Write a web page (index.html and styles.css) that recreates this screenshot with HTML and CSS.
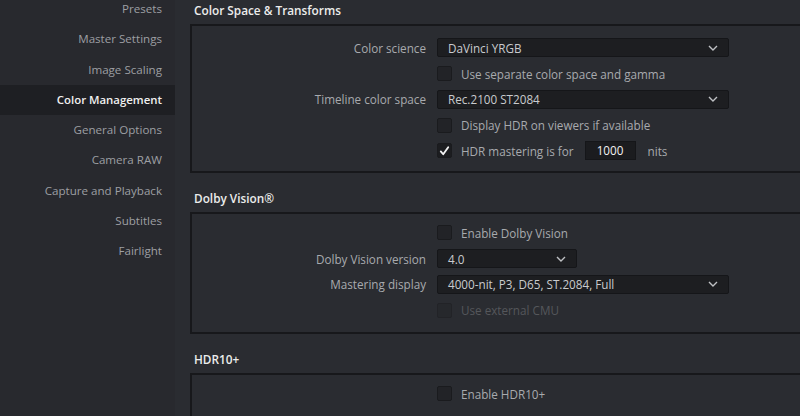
FILE: index.html
```html
<!DOCTYPE html>
<html>
<head>
<meta charset="utf-8">
<link rel="stylesheet" href="styles.css">
</head>
<body>
<div class="app">
  <nav class="sidebar">
    <ul class="nav-list">
      <li class="nav-item">Presets</li>
      <li class="nav-item">Master Settings</li>
      <li class="nav-item">Image Scaling</li>
      <li class="nav-item active">Color Management</li>
      <li class="nav-item">General Options</li>
      <li class="nav-item">Camera RAW</li>
      <li class="nav-item">Capture and Playback</li>
      <li class="nav-item">Subtitles</li>
      <li class="nav-item">Fairlight</li>
    </ul>
  </nav>
  <main class="content">
    <h2 class="section-title">Color Space &amp; Transforms</h2>
    <section class="panel panel-cs">
      <div class="row">
        <label class="row-label">Color science</label>
        <div class="select wide"><span>DaVinci YRGB</span><svg class="chev" viewBox="0 0 10 6" width="10" height="6"><path d="M1 1l4 4 4-4" fill="none" stroke="#bfc1c4" stroke-width="1.4"/></svg></div>
      </div>
      <div class="row">
        <span></span>
        <div class="check-line"><span class="box"></span><span class="check-text">Use separate color space and gamma</span></div>
      </div>
      <div class="row">
        <label class="row-label">Timeline color space</label>
        <div class="select wide"><span>Rec.2100 ST2084</span><svg class="chev" viewBox="0 0 10 6" width="10" height="6"><path d="M1 1l4 4 4-4" fill="none" stroke="#bfc1c4" stroke-width="1.4"/></svg></div>
      </div>
      <div class="row">
        <span></span>
        <div class="check-line"><span class="box"></span><span class="check-text">Display HDR on viewers if available</span></div>
      </div>
      <div class="row">
        <span></span>
        <div class="check-line"><span class="box checked"><svg viewBox="0 0 14 14" width="14" height="14"><path d="M3 7.5l2.6 3L11 3" fill="none" stroke="#f2f2f2" stroke-width="2" stroke-linecap="round" stroke-linejoin="round"/></svg></span><span class="check-text">HDR mastering is for</span><span class="num-input">1000</span><span class="check-text unit">nits</span></div>
      </div>
    </section>

    <h2 class="section-title">Dolby Vision®</h2>
    <section class="panel panel-dv">
      <div class="row">
        <span></span>
        <div class="check-line"><span class="box"></span><span class="check-text">Enable Dolby Vision</span></div>
      </div>
      <div class="row">
        <label class="row-label">Dolby Vision version</label>
        <div class="select narrow"><span>4.0</span><svg class="chev" viewBox="0 0 10 6" width="10" height="6"><path d="M1 1l4 4 4-4" fill="none" stroke="#bfc1c4" stroke-width="1.4"/></svg></div>
      </div>
      <div class="row">
        <label class="row-label">Mastering display</label>
        <div class="select wide"><span>4000-nit, P3, D65, ST.2084, Full</span><svg class="chev" viewBox="0 0 10 6" width="10" height="6"><path d="M1 1l4 4 4-4" fill="none" stroke="#bfc1c4" stroke-width="1.4"/></svg></div>
      </div>
      <div class="row">
        <span></span>
        <div class="check-line disabled"><span class="box"></span><span class="check-text">Use external CMU</span></div>
      </div>
    </section>

    <h2 class="section-title">HDR10+</h2>
    <section class="panel panel-hdr">
      <div class="row">
        <span></span>
        <div class="check-line"><span class="box"></span><span class="check-text">Enable HDR10+</span></div>
      </div>
    </section>
  </main>
</div>
</body>
</html>
```
FILE: styles.css
```css
* { box-sizing: border-box; }
html, body {
  margin: 0;
  padding: 0;
  width: 800px;
  height: 416px;
  overflow: hidden;
  background: #2a2c31;
  font-family: "Open Sans", "Liberation Sans", sans-serif;
  font-size: 11.7px;
  color: #a6a8ac;
}
.app {
  display: flex;
  height: 416px;
  overflow: hidden;
}
.sidebar {
  width: 175px;
  flex: none;
  background: #28292e;
}
.nav-list {
  list-style: none;
  margin: -6px 0 0 0;
  padding: 0;
}
.nav-item {
  height: 30.25px;
  line-height: 30px;
  text-align: right;
  padding-right: 13px;
  color: #9d9fa3;
  font-size: 11.6px;
}
.nav-item.active {
  background: #1e1f23;
  color: #f0f0f0;
  font-weight: 600;
  font-size: 11.4px;
}
.content {
  flex: 1;
  margin-left: 15px;
  margin-top: -15px;
  margin-right: -20px;
  min-width: 0;
}
.section-title {
  margin: 0;
  height: 39px;
  padding: 17px 0 0 4px;
  line-height: 16px;
  font-size: 11.8px;
  font-weight: 600;
  color: #ececec;
}
.panel {
  border-top: 2px solid #17181b;
  border-bottom: 2px solid #17181b;
  border-left: 2px solid #17181b;
  background: #2a2c31;
}
.panel-cs { padding: 9px 0 7px; height: 149px; }
.panel-dv { padding: 6px 0 9px; height: 122px; }
.panel-hdr { padding: 6px 0 9px; height: 80px; }
.row {
  display: grid;
  grid-template-columns: 234px 1fr;
  column-gap: 11px;
  align-items: center;
  height: 25.75px;
}
.row-label {
  text-align: right;
  color: #a8aaae;
}
.select {
  height: 19px;
  background: #1d1e21;
  border: 1px solid #151619;
  border-radius: 2px;
  display: flex;
  align-items: center;
  justify-content: space-between;
  padding: 0 10px 0 10px;
  color: #c9cbce;
}
.select.wide { width: 292px; }
.select.narrow { width: 140px; }
.chev { flex: none; }
.check-line {
  display: flex;
  align-items: center;
}
.box {
  width: 15px;
  height: 15px;
  flex: none;
  background: #222327;
  border: 1px solid #1a1b1e;
  border-radius: 2px;
  display: flex;
  align-items: center;
  justify-content: center;
}
.box.checked { background: #1c1d20; }
.check-text {
  margin-left: 9px;
  color: #a8aaae;
}
.num-input {
  margin-left: 11px;
  width: 51px;
  height: 19px;
  line-height: 17px;
  text-align: center;
  background: #1b1c1f;
  border: 1px solid #151619;
  color: #f2f2f2;
}
.check-text.unit { margin-left: 12px; }
.check-line.disabled .check-text { color: #55575b; }
.check-line.disabled .box { background: #26282c; border-color: #222327; }
```
